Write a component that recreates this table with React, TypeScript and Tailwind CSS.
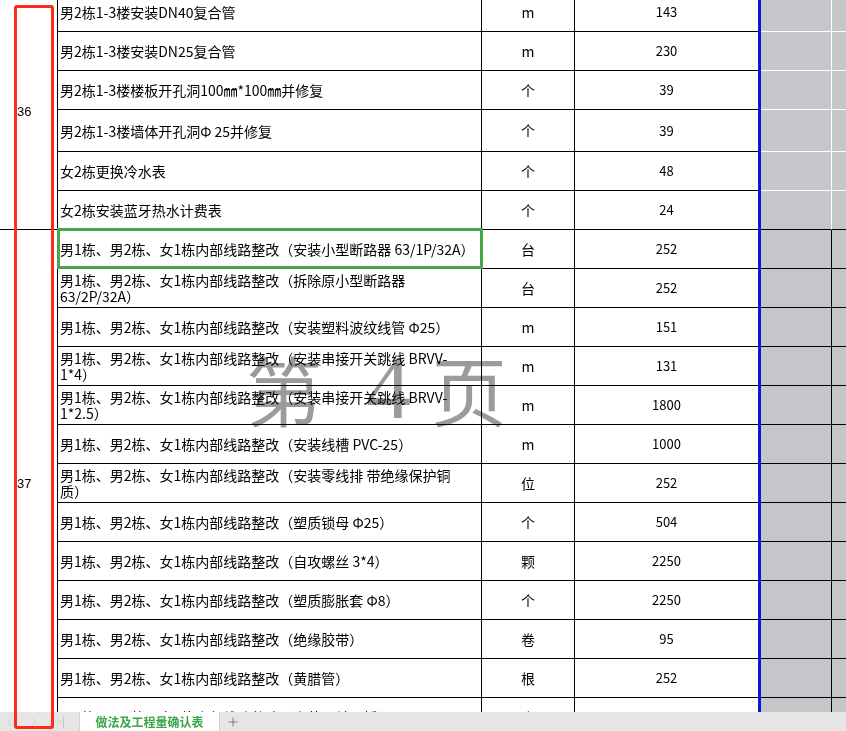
import React from "react";
import { ChevronLeft, ChevronRight, Plus } from "lucide-react";

type Row = { d: string[]; u: string; q: string; h?: string; sel?: boolean };

const P = "男1栋、男2栋、女1栋内部线路整改";

const sec36: Row[] = [
  { d: ["男2栋1-3楼安装DN40复合管"], u: "m", q: "143" },
  { d: ["男2栋1-3楼安装DN25复合管"], u: "m", q: "230" },
  { d: ["男2栋1-3楼楼板开孔洞100㎜*100㎜并修复"], u: "个", q: "39" },
  { d: ["男2栋1-3楼墙体开孔洞Φ 25并修复"], u: "个", q: "39", h: "h-[42px]" },
  { d: ["女2栋更换冷水表"], u: "个", q: "48" },
  { d: ["女2栋安装蓝牙热水计费表"], u: "个", q: "24" },
];

const sec37: Row[] = [
  { d: [P + "（安装小型断路器 63/1P/32A）"], u: "台", q: "252", sel: true },
  { d: [P + "（拆除原小型断路器", "63/2P/32A）"], u: "台", q: "252" },
  { d: [P + "（安装塑料波纹线管 Φ25）"], u: "m", q: "151" },
  { d: [P + "（安装串接开关跳线 BRVV-", "1*4）"], u: "m", q: "131" },
  { d: [P + "（安装串接开关跳线 BRVV-", "1*2.5）"], u: "m", q: "1800" },
  { d: [P + "（安装线槽 PVC-25）"], u: "m", q: "1000" },
  { d: [P + "（安装零线排 带绝缘保护铜", "质）"], u: "位", q: "252" },
  { d: [P + "（塑质锁母 Φ25）"], u: "个", q: "504" },
  { d: [P + "（自攻螺丝 3*4）"], u: "颗", q: "2250" },
  { d: [P + "（塑质膨胀套 Φ8）"], u: "个", q: "2250" },
  { d: [P + "（绝缘胶带）"], u: "卷", q: "95" },
  { d: [P + "（黄腊管）"], u: "根", q: "252" },
  { d: [P + "（安装开关面板）"], u: "个", q: "252" },
];

function TableRow({ row, light, last }: { row: Row; light: boolean; last: boolean }) {
  const vLine = light ? "border-r-white" : "border-r-black";
  const hLine = light && !last ? "border-b-white" : "border-b-black";
  return (
    <div className={`flex ${row.h ?? "h-[39px]"}`}>
      <div className="relative w-[424px] border-l border-b border-black pl-[2px] flex items-center">
        <div className="leading-[16px] whitespace-nowrap">
          {row.d.map((line, i) => (
            <div key={i}>{line}</div>
          ))}
        </div>
        {row.sel && (
          <div className="absolute -top-[2px] -left-[1px] -right-[2px] -bottom-[1px] border-[3px] border-[#4aa64a]" />
        )}
      </div>
      <div className="w-[93px] border-l border-b border-black flex items-center justify-center">
        {row.u}
      </div>
      <div className="w-[184px] border-l border-b border-black flex items-center justify-center text-[13px]">
        {row.q}
      </div>
      <div className="w-[3px] bg-[#0a14d8]" />
      <div className={`w-[71px] bg-[#c6c5c9] border-b border-r ${hLine} ${vLine}`} />
      <div className={`flex-1 bg-[#c6c5c9] border-b ${hLine}`} />
    </div>
  );
}

function Section({ num, rows, light }: { num: string; rows: Row[]; light: boolean }) {
  return (
    <div className="flex">
      <div className="w-[57px] border-b border-black flex items-center pl-[17px] pt-[2px] text-[13px] font-['Liberation_Sans',sans-serif]">
        {num}
      </div>
      <div className="flex-1 flex flex-col">
        {rows.map((r, i) => (
          <TableRow key={i} row={r} light={light} last={i === rows.length - 1} />
        ))}
      </div>
    </div>
  );
}

export default function App() {
  return (
    <div className="relative w-[846px] h-[731px] overflow-hidden bg-white text-black text-[14px] font-['Noto_Sans_CJK_SC',sans-serif] flex flex-col">
      <div className="relative h-[712px] overflow-hidden">
        <div className="mt-[-7px]">
          <Section num="36" rows={sec36} light />
          <Section num="37" rows={sec37} light={false} />
        </div>
        {/* 页码水印 */}
        <div className="absolute left-[246px] top-[340px] flex items-center text-[76px] leading-[96px] text-[#9b9b9b] mix-blend-multiply pointer-events-none">
          <span>第</span>
          <span className="ml-[44px] text-[90px] font-['Liberation_Serif',serif]">4</span>
          <span className="ml-[20px]">页</span>
        </div>
      </div>

      {/* 底部工作表标签 */}
      <div className="h-[19px] bg-[#e6e6e6] flex items-stretch">
        <div className="w-[80px] flex items-center text-[#c4c4c4] border-r border-[#d2d2d2]">
          <ChevronLeft className="w-[14px] h-[14px] ml-[2px]" strokeWidth={1.2} />
          <ChevronRight className="w-[14px] h-[14px] ml-[11px]" strokeWidth={1.2} />
          <ChevronRight className="w-[14px] h-[14px] ml-[11px]" strokeWidth={1.2} />
          <div className="w-px h-[12px] bg-[#c4c4c4] -ml-[3px]" />
        </div>
        <div className="w-[140px] bg-white flex items-center justify-center text-[12px] font-bold text-[#3aa648] border-r border-[#d2d2d2]">
          做法及工程量确认表
        </div>
        <div className="flex items-center pl-[6px] text-[#555]">
          <Plus className="w-[14px] h-[14px]" strokeWidth={1.2} />
        </div>
      </div>

      {/* 红色标注框 */}
      <div className="absolute left-[14px] top-[5px] w-[40px] h-[724px] border-[3px] border-[#ff2a1a] rounded-[3px] pointer-events-none" />
    </div>
  );
}
